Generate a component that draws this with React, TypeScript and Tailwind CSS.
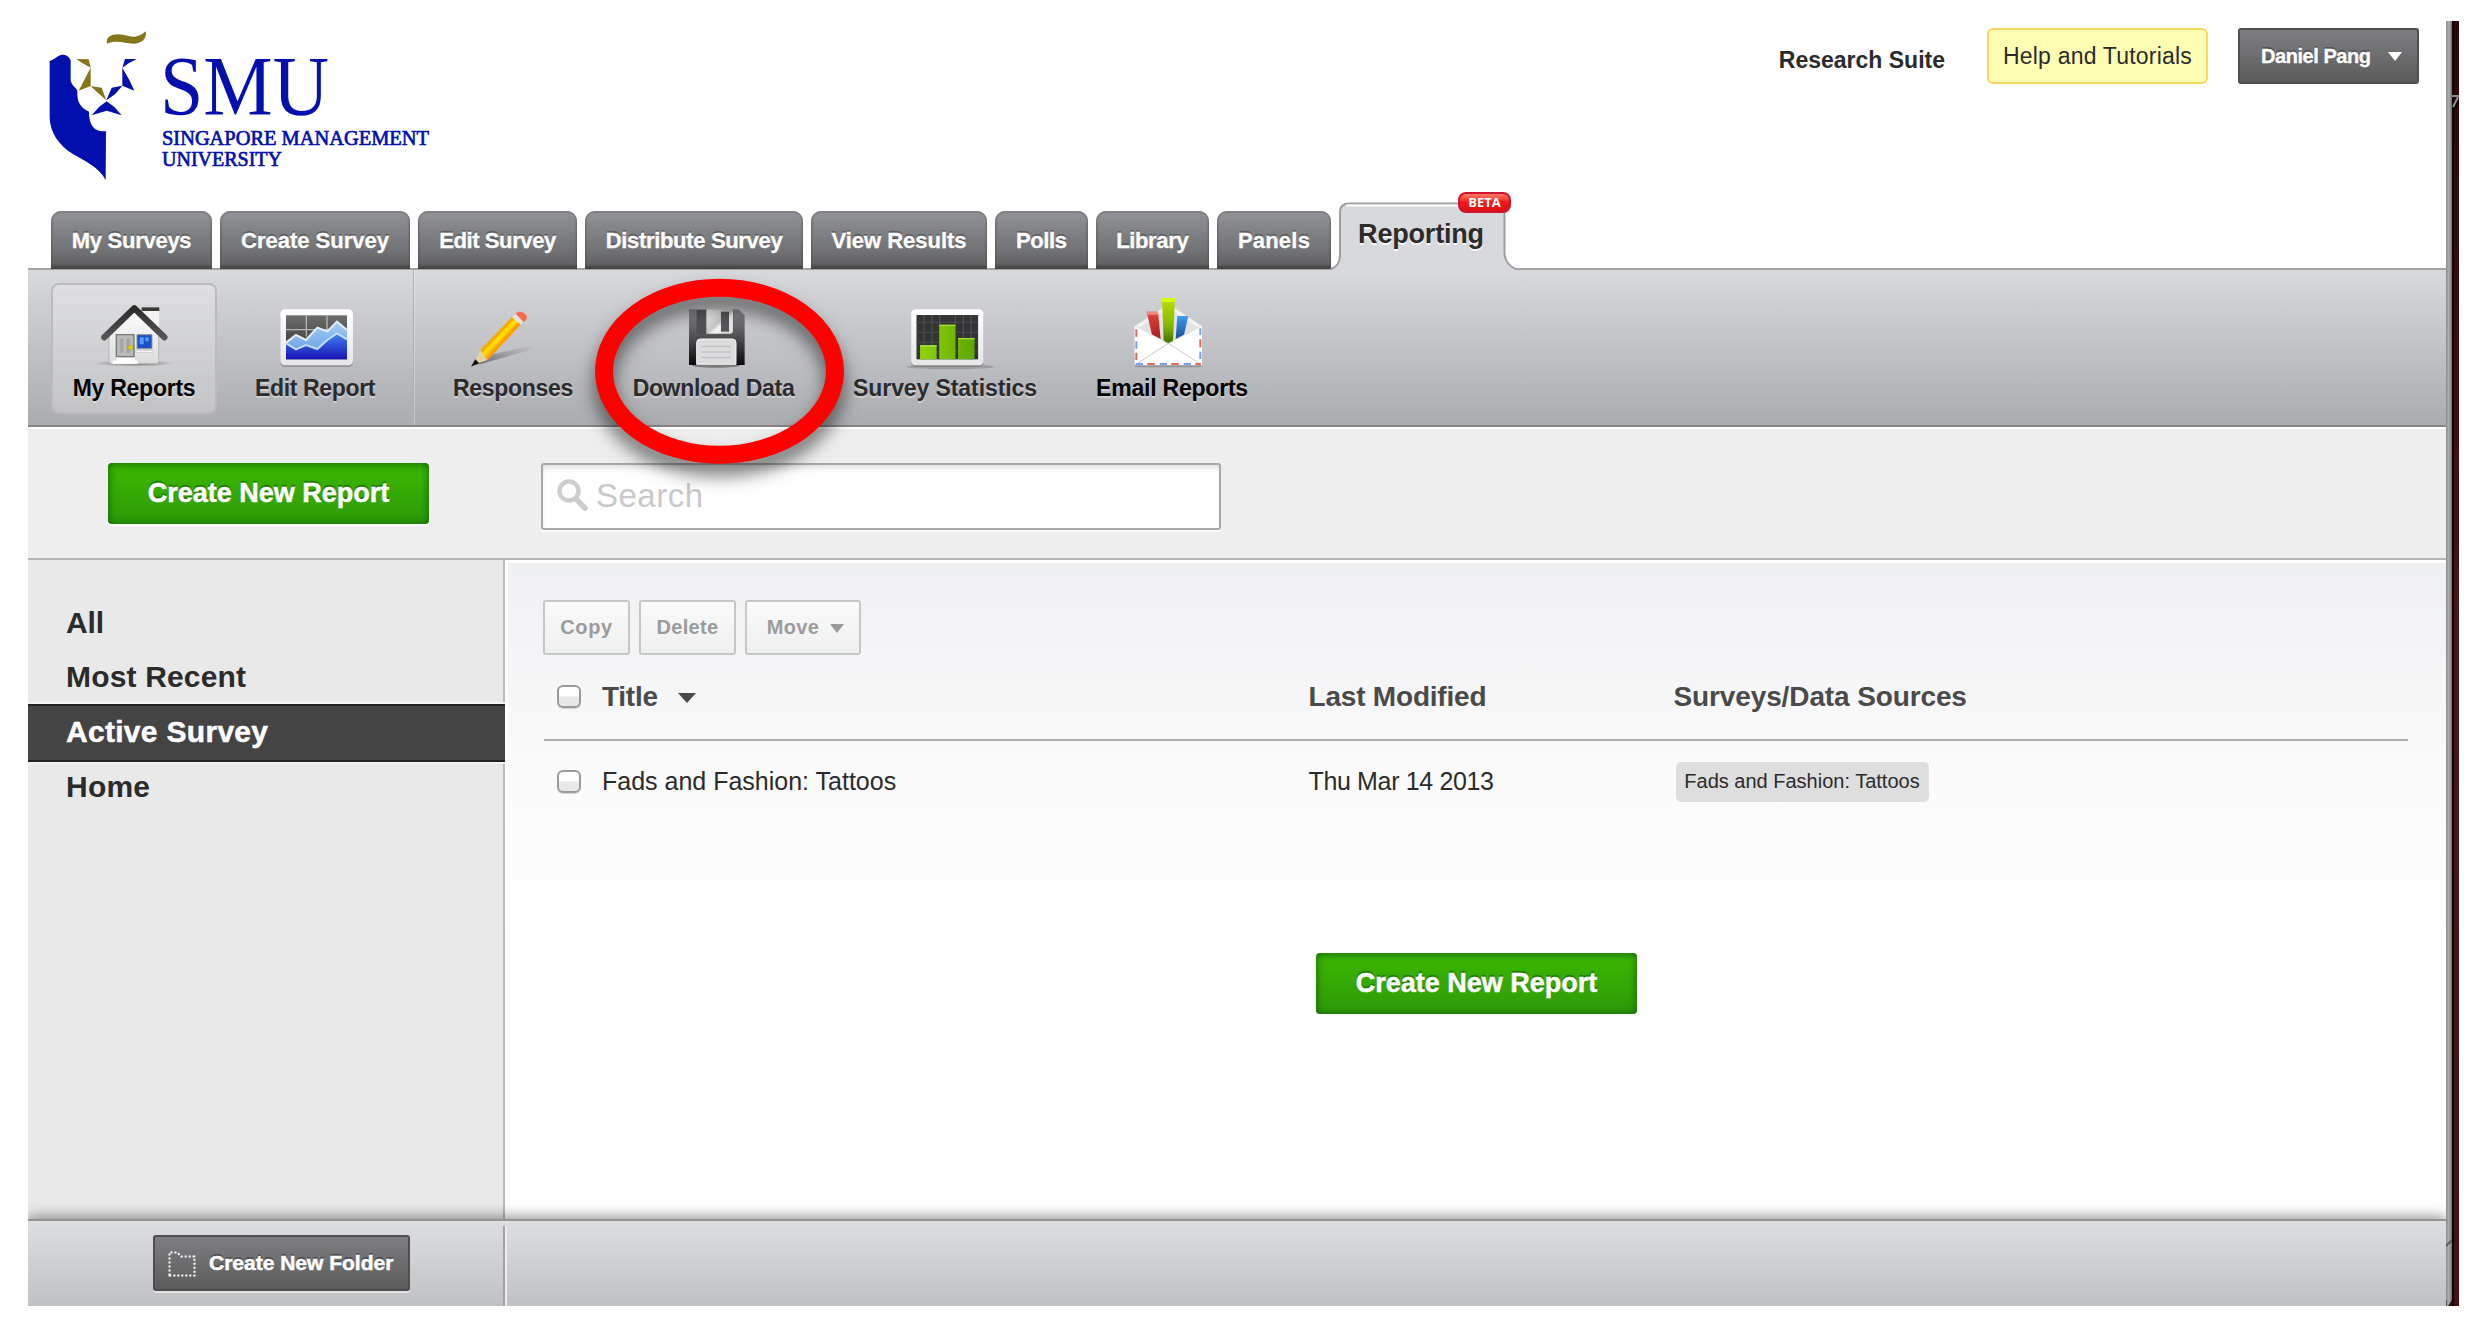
import type { ReactNode } from "react";

type Tab = { label: string; cls: string };

const tabs: Tab[] = [
  { label: "My Surveys", cls: "w-[161px] tracking-[-0.26px]" },
  { label: "Create Survey", cls: "w-[190px] tracking-normal" },
  { label: "Edit Survey", cls: "w-[159px] tracking-[-0.4px]" },
  { label: "Distribute Survey", cls: "w-[218px] tracking-[-0.32px]" },
  { label: "View Results", cls: "w-[176px] tracking-[-0.03px]" },
  { label: "Polls", cls: "w-[92.5px] tracking-[-0.39px]" },
  { label: "Library", cls: "w-[113.5px] tracking-[-0.35px]" },
  { label: "Panels", cls: "w-[114px] tracking-[0.21px]" },
];

function Logo() {
  return (
    <svg className="h-[170px] w-[450px]" viewBox="28 21 450 170">
      <g transform="scale(0.33333)">
        <path
          fill="#0310ad"
          d="M149 183C165 178 172 165 188 164C200 164 210 172 212 182L212 242C216 258 228 262 232 272C231 300 236 320 267 335C267 365 275 390 305 394L318 394L317 541C300 504 250 480 220 463C175 435 149 395 149 350Z"
        />
        <path
          fill="#85761a"
          d="M321 131C316 112 335 102 357 103C375 104 388 112 405 110C420 108 430 100 438 94C440 118 425 131 400 131C375 131 350 118 321 131Z"
        />
        <path fill="#85761a" d="M229 177L266 178L272 203L248 190ZM272 203L272 258L236 272ZM272 258L305 263L319 301L294 279Z" />
        <path
          fill="#0310ad"
          d="M375 177L410 177L386 190L367 203ZM367 203L388 240L403 272L367 257ZM367 257L345 283L319 301L335 263ZM320 304L343 321L365 346L320 332L275 346L297 321Z"
        />
      </g>
      <g fill="#0310ad" fontFamily="'Liberation Serif', serif">
        <text x="160" y="115.3" fontSize="85" textLength="169" lengthAdjust="spacingAndGlyphs">
          SMU
        </text>
        <g fontSize="21" stroke="#0310ad" strokeWidth="0.7">
          <text x="162" y="145.3" textLength="267" lengthAdjust="spacingAndGlyphs">
            SINGAPORE MANAGEMENT
          </text>
          <text x="162" y="165.7" textLength="120" lengthAdjust="spacingAndGlyphs">
            UNIVERSITY
          </text>
        </g>
      </g>
    </svg>
  );
}

const iconCls = "h-[80px] w-[80px] shrink-0 overflow-visible";

function HouseIcon() {
  return (
    <svg className={iconCls} viewBox="94 290 80 80">
      <defs>
        <linearGradient id="wall" x1="0" y1="0" x2="0" y2="1">
          <stop offset="0" stopColor="#fff" />
          <stop offset="1" stopColor="#dcdcdc" />
        </linearGradient>
        <linearGradient id="roof" x1="0" y1="0" x2="0" y2="1">
          <stop offset="0" stopColor="#2c2c2c" />
          <stop offset="1" stopColor="#555" />
        </linearGradient>
        <radialGradient id="ground">
          <stop offset="0" stopColor="#000" stopOpacity=".5" />
          <stop offset="1" stopColor="#000" stopOpacity="0" />
        </radialGradient>
      </defs>
      <g transform="translate(90 290) scale(0.33333)">
        <ellipse cx="132" cy="220" rx="118" ry="10" fill="url(#ground)" />
        <path d="M157 60H207V150H157Z" fill="#f4f4f4" />
        <path d="M155 52H208V63H155Z" fill="#3a3a38" />
        <path d="M57 125L133 58L206 125V216Q206 221 200 221H63Q57 221 57 216Z" fill="url(#wall)" stroke="#a8a8a8" strokeWidth="2" />
        <path d="M43 142L133 55L223 142" fill="none" stroke="url(#roof)" strokeWidth="19" strokeLinecap="round" strokeLinejoin="round" />
        <path d="M79 134H132V200H79Z" fill="#b9b9b7" stroke="#777" strokeWidth="4" />
        <path d="M88 144H102V190H88ZM108 144H122V190H108Z" fill="#a5a5a3" stroke="#d8d8d8" strokeWidth="1" />
        <circle cx="121" cy="172" r="7" fill="#e6d600" stroke="#8b8000" strokeWidth="1" />
        <path d="M141 134H186V176H141Z" fill="#1e50c8" stroke="#8f9499" strokeWidth="3" />
        <path d="M149 142H161V163H149ZM166 142H176V154H166Z" fill="#5a9bf5" />
        <path d="M138 181H189V187H138Z" fill="#fff" stroke="#aaa" strokeWidth="1.5" />
        <path d="M79 203H136V211H144V222H67V211H79Z" fill="#fff" stroke="#c4c4c4" strokeWidth="1" />
      </g>
    </svg>
  );
}

function AreaChartIcon() {
  return (
    <svg className={iconCls} viewBox="275 290 80 80">
      <defs>
        <linearGradient id="screen" x1="0" y1="0" x2="0" y2="1">
          <stop offset="0" stopColor="#6d6d6d" />
          <stop offset="1" stopColor="#2a2a2a" />
        </linearGradient>
        <linearGradient id="deep" x1="0" y1="0" x2="0" y2="1">
          <stop offset="0" stopColor="#3f86f2" />
          <stop offset="1" stopColor="#1a10b4" />
        </linearGradient>
        <linearGradient id="light" x1="0" y1="0" x2="0" y2="1">
          <stop offset="0" stopColor="#a8cdf5" />
          <stop offset="1" stopColor="#6ba5e6" />
        </linearGradient>
        <linearGradient id="frame" x1="0" y1="0" x2="0" y2="1">
          <stop offset="0" stopColor="#fff" />
          <stop offset="1" stopColor="#e6e6e8" />
        </linearGradient>
      </defs>
      <g transform="translate(90 290) scale(0.33333)">
        <rect x="571" y="63" width="218" height="168" rx="14" fill="#777" opacity=".6" />
        <rect x="571" y="58" width="218" height="168" rx="14" fill="url(#frame)" />
        <rect x="588" y="76" width="183" height="132" fill="url(#screen)" />
        <path d="M649 76V140M711 76V120M588 119H690M700 119H771" stroke="#b5b5b5" strokeWidth="4" fill="none" />
        <path d="M588 158L618 135L648 150L682 113L712 124L741 95L771 120V180H588Z" fill="url(#light)" />
        <path d="M588 160L618 178L648 165L682 177L712 150L741 130L771 148V208H588Z" fill="url(#deep)" />
        <path d="M588 158L618 135L648 150L682 113L712 124L741 95L771 120" fill="none" stroke="#e6ecfb" strokeWidth="6" />
        <path d="M588 160L618 178L648 165L682 177L712 150L741 130L771 148" fill="none" stroke="#c3daf8" strokeWidth="6" />
      </g>
    </svg>
  );
}

function PencilIcon() {
  return (
    <svg className={iconCls} viewBox="473 290 80 80">
      <defs>
        <linearGradient id="cast" x1="0" y1="1" x2="1" y2="0">
          <stop offset="0" stopColor="#333" stopOpacity=".65" />
          <stop offset="1" stopColor="#666" stopOpacity="0" />
        </linearGradient>
      </defs>
      <g transform="translate(400 280) scale(0.33333)">
        <path d="M222 256L262 226L400 196L398 208L250 250Z" fill="url(#cast)" />
        <path d="M241 210L336 111L362 134L262 240Z" fill="#ffbf00" />
        <path d="M241 210L336 111L344 118L248 219Z" fill="#f7ab00" />
        <path d="M257 234L355 127L362 134L262 240Z" fill="#ff9c00" />
        <path d="M247 218L343 117L352 125L254 227Z" fill="#ffdc00" />
        <path d="M336 111L347 101L371 124L362 134Z" fill="#e3e3e3" />
        <path d="M347 101C352 93 364 94 371 99C380 105 384 112 379 118L371 126Z" fill="#f8694f" />
        <path d="M241 210L262 240L234 250L226 240Z" fill="#e6d2a0" />
        <path d="M226 238L237 249L213 260Z" fill="#111" />
      </g>
    </svg>
  );
}

function FloppyIcon() {
  return (
    <svg className={iconCls} viewBox="674 290 80 80">
      <defs>
        <linearGradient id="disk" x1="0" y1="0" x2="0" y2="1">
          <stop offset="0" stopColor="#8d8e90" />
          <stop offset=".45" stopColor="#555558" />
          <stop offset="1" stopColor="#0c0c0d" />
        </linearGradient>
        <linearGradient id="metal" x1="0" y1="0" x2="1" y2="1">
          <stop offset="0" stopColor="#fff" />
          <stop offset=".5" stopColor="#c4c4c4" />
          <stop offset=".6" stopColor="#f2f2f2" />
          <stop offset="1" stopColor="#d8d8d8" />
        </linearGradient>
      </defs>
      <g transform="translate(400 280) scale(0.33333)">
        <ellipse cx="948" cy="256" rx="72" ry="7" fill="#444" opacity=".55" />
        <path d="M867 88H1016L1034 106V255H867Z" fill="url(#disk)" />
        <path d="M890 90H1000V150Q1000 162 988 162H890Z" fill="#4b4c4f" opacity=".8" />
        <path d="M919 88H999V152Q999 161 990 161H919Z" fill="url(#metal)" />
        <path d="M963 95H987V155H963Z" fill="#555659" />
        <path d="M890 253V188Q890 177 901 177H997Q1008 177 1008 188V253Z" fill="#dcdcde" stroke="#f7f7f7" strokeWidth="3" />
        <path d="M905 199H993M905 216H993M905 233H993" stroke="#b8b8ba" strokeWidth="3" />
      </g>
    </svg>
  );
}

function BarChartIcon() {
  return (
    <svg className={iconCls} viewBox="905 290 80 80">
      <defs>
        <linearGradient id="bar" x1="0" y1="0" x2="1" y2="0">
          <stop offset="0" stopColor="#8fd40a" />
          <stop offset="1" stopColor="#5fa600" />
        </linearGradient>
      </defs>
      <g transform="translate(600 180) scale(0.4464 0.33333)">
        <ellipse cx="785" cy="560" rx="98" ry="8" fill="#555" opacity=".3" />
        <rect x="697" y="393" width="162" height="168" rx="12" fill="#777" opacity=".6" />
        <rect x="697" y="388" width="162" height="168" rx="12" fill="url(#frame)" />
        <rect x="709" y="405" width="138" height="133" fill="#333436" />
        <path
          d="M726 405V538M744 405V538M761 405V538M796 405V538M814 405V538M831 405V538M709 427H847M709 457H847M709 487H847M709 515H847"
          stroke="#4d4e50"
          strokeWidth="3"
        />
        <path d="M717 496H754V538H717ZM760 434H796V538H760ZM802 474H839V538H802Z" fill="url(#bar)" />
        <path d="M717 498H754M760 436H796M802 476H839" stroke="#a9e23a" strokeWidth="4" />
      </g>
    </svg>
  );
}

function EnvelopeIcon() {
  return (
    <svg className={iconCls} viewBox="1132 290 80 80">
      <defs>
        <linearGradient id="red" x1="0" y1="0" x2="0" y2="1">
          <stop offset="0" stopColor="#e0483c" />
          <stop offset="1" stopColor="#a81c18" />
        </linearGradient>
        <linearGradient id="green" gradientUnits="userSpaceOnUse" x1="0" y1="384" x2="0" y2="521">
          <stop offset="0" stopColor="#b8e000" />
          <stop offset=".6" stopColor="#86b800" />
          <stop offset="1" stopColor="#3f6d00" />
        </linearGradient>
        <linearGradient id="blue" x1="0" y1="0" x2="0" y2="1">
          <stop offset="0" stopColor="#3f9cf0" />
          <stop offset="1" stopColor="#1a4f92" />
        </linearGradient>
      </defs>
      <g transform="translate(1100 170) scale(0.33333)">
        <rect x="104" y="560" width="202" height="32" rx="5" fill="#555" opacity=".4" />
        <path d="M104 468L190 412H222L306 468V520H104Z" fill="#f3f3f3" stroke="#d0d0d0" strokeWidth="2" />
        <path d="M116 474L205 415L296 474L205 520Z" fill="#e2e2e4" />
        <path d="M140 425H174L182 508L156 494Z" fill="url(#red)" />
        <path d="M140 425H174L175 434H142Z" fill="#f08a80" />
        <path d="M232 438H265L252 494L227 508Z" fill="url(#blue)" />
        <path d="M104 468L205 520L306 468V586H104Z" fill="#fff" />
        <path d="M186 384H225L219 514L205 521L191 514Z" fill="url(#green)" />
        <path d="M186 384H225L224 396H187Z" fill="#d4ff00" />
        <path d="M108 583L205 520L302 583" fill="none" stroke="#c9c9c9" strokeWidth="3" />
        <path d="M108 470L205 520L302 470" fill="none" stroke="#d8d8d8" strokeWidth="2" />
        <path d="M109 478V500M109 548V570M301 508V532" stroke="#e0695e" strokeWidth="6" />
        <path d="M109 514V536M301 475V495M301 545V567" stroke="#7d9df0" strokeWidth="6" />
        <path d="M107 582H303" stroke="#7d9df0" strokeWidth="6" strokeDasharray="22 50" />
        <path d="M142 582H303" stroke="#e0695e" strokeWidth="6" strokeDasharray="22 50" />
      </g>
    </svg>
  );
}

function ToolItem({ label, cls, icon }: { label: string; cls: string; icon: ReactNode }) {
  return (
    <div className={"mt-[13px] flex h-[131px] flex-col items-center rounded-[8px] border-2 pt-[5px] " + cls}>
      {icon}
      <span className="mt-[4px] text-[23px] leading-[28px] font-bold whitespace-nowrap [text-shadow:0_2px_0_rgba(255,255,255,0.35)]">{label}</span>
    </div>
  );
}

function GreenButton() {
  return (
    <button className="flex h-[61px] w-[321px] items-center justify-center rounded-[4px] bg-linear-to-b from-[#3cb800] to-[#2d9a08] text-[27px] leading-[61px] font-bold text-white shadow-[inset_0_1px_8px_rgba(0,70,0,0.75),0_2px_0_rgba(255,255,255,0.8)] [-webkit-text-stroke:0.5px_white] [text-shadow:0_-2px_1px_rgba(0,60,0,0.5)]">
      Create New Report
    </button>
  );
}

function SmallButton({ label, cls, caret }: { label: string; cls: string; caret?: boolean }) {
  return (
    <button
      className={
        "flex h-[55px] items-center justify-center gap-[11px] rounded-[3px] border-2 border-[#c6c7c8] bg-linear-to-b from-[#fafafa] to-[#eeefef] text-[20px] leading-[51px] font-bold text-[#9b9b9b] " +
        cls
      }
    >
      {label}
      {caret && <Caret className="mt-[2px] h-[9px] w-[14px] text-[#9b9b9b]" />}
    </button>
  );
}

function Caret({ className }: { className: string }) {
  return (
    <svg className={className} viewBox="0 0 14 9" preserveAspectRatio="none">
      <path d="M0 0H14L7 9Z" fill="currentColor" />
    </svg>
  );
}

function CheckBox() {
  return (
    <span className="ml-[13px] block h-[23px] w-[24px] rounded-[6px] border-2 border-[#9b9b9b] bg-linear-to-b from-white from-45% to-[#e8e8e8] to-55% shadow-[0_1px_1px_rgba(0,0,0,0.15)]" />
  );
}

export default function App() {
  return (
    <div className="relative flex h-[1332px] w-[2478px] overflow-hidden bg-white pt-[21px] pl-[28px] font-['Liberation_Sans',Arial,sans-serif]">
      <div className="flex h-[1285px] w-[2418px] flex-col overflow-hidden bg-white">
        <header className="flex h-[170px] shrink-0 justify-between">
          <Logo />
          <div className="flex items-start pt-[7px] pr-[27px]">
            <span className="mt-[5px] mr-[42px] text-[23px] leading-[55px] font-bold text-[#2b2b2b]">Research Suite</span>
            <button className="mr-[30px] h-[56px] w-[221px] rounded-[6px] border-2 border-[#fdd45c] bg-[#ffffb3] text-center text-[23px] leading-[53px] tracking-[0.21px] text-[#2b2b2b]">
              Help and Tutorials
            </button>
            <button className="flex h-[56px] w-[181px] items-center rounded-[3px] border-2 border-[#4f4f50] bg-linear-to-b from-[#7e7f82] to-[#5b5b5b] pl-[21px] text-[20px] leading-[50px] font-bold tracking-[-0.45px] text-white [-webkit-text-stroke:0.3px_white] [text-shadow:0_-2px_0_rgba(0,0,0,0.3)]">
              <span className="-mt-[1px]">Daniel Pang</span>
              <Caret className="mt-[1px] ml-[17px] h-[9px] w-[14px] text-white" />
            </button>
          </div>
        </header>

        <nav className="relative z-10 -mb-[1px] flex h-[78px] shrink-0 items-end gap-2 pl-[23px]">
          {tabs.map((t) => (
            <a
              key={t.label}
              className={
                "h-[58px] rounded-t-[10px] bg-linear-to-b from-[#929396] via-[#707174] via-70% to-[#5c5c5e] pt-[1px] text-center text-[22px] leading-[57px] font-bold whitespace-nowrap text-white shadow-[inset_0_2px_0_#808184,inset_0_-3px_3px_#444] [-webkit-text-stroke:0.3px_white] [text-shadow:0_-2px_0_rgba(0,0,0,0.3)] " +
                t.cls
              }
            >
              {t.label}
            </a>
          ))}
          <div className="relative h-[67px] w-[166px]">
            <svg className="absolute -top-[1px] -left-[9px] h-[70px] w-[186px]" viewBox="1330 200 186 70">
              <path
                d="M1330 268.5C1337 266 1340 262 1340 254V211Q1340 202.5 1349 202.5H1496Q1504.5 202.5 1504.5 211V252C1504.5 260 1510 266 1516 268.5V270H1330Z"
                fill="#d8d9dd"
              />
              <path
                d="M1330 268.5C1337 266 1340 262 1340 254V211Q1340 202.5 1349 202.5H1496Q1504.5 202.5 1504.5 211V252C1504.5 260 1510 266 1516 268"
                fill="none"
                stroke="#9d9ea0"
                strokeWidth="2"
              />
              <path d="M1346 204.5H1498" stroke="#fff" strokeWidth="2" />
            </svg>
            <span className="relative block pr-[2px] text-center text-[27px] leading-[64px] font-bold tracking-[-0.19px] text-[#2b2b2b] [text-shadow:0_2px_0_rgba(255,255,255,0.8)]">
              Reporting
            </span>
            <span className="absolute -top-[10px] left-[119px] flex h-[21px] w-[53px] items-center justify-center rounded-[8px] border-2 border-[#cc1430] bg-linear-to-b from-[#ff7a66] via-[#ee1a1a] via-45% to-[#e01010] font-['Open_Sans',sans-serif] text-[13px] leading-[17px] font-bold text-white">
              BETA
            </span>
          </div>
        </nav>

        <div className="flex h-[159px] shrink-0 border-t-2 border-b-2 border-t-[#a2a3a5] border-b-[#858587] bg-linear-to-b from-[#d8d9dd] to-[#abacaf] pl-[23px] text-[#2b2b2e]">
          <ToolItem label="My Reports" cls="w-[166px] border-[#babbbe] bg-white/25 text-black tracking-[-0.25px]" icon={<HouseIcon />} />
          <ToolItem label="Edit Report" cls="w-[196px] border-transparent tracking-[-0.35px]" icon={<AreaChartIcon />} />
          <div className="w-[2px] border-l border-l-[#aeafb2] bg-white/30" />
          <ToolItem label="Responses" cls="w-[196px] border-transparent tracking-[-0.28px]" icon={<PencilIcon />} />
          <ToolItem label="Download Data" cls="w-[205px] border-transparent tracking-[-0.34px]" icon={<FloppyIcon />} />
          <ToolItem label="Survey Statistics" cls="w-[258px] border-transparent tracking-[-0.09px]" icon={<BarChartIcon />} />
          <ToolItem label="Email Reports" cls="w-[196px] border-transparent text-black tracking-[-0.22px]" icon={<EnvelopeIcon />} />
        </div>

        <div className="flex h-[133px] shrink-0 border-t-2 border-b-2 border-t-white border-b-[#b6b6b6] bg-[#eeeeee] pt-[34px] pl-[80px]">
          <GreenButton />
          <div className="ml-[112px] flex h-[67px] w-[680px] rounded-[3px] border-2 border-[#a8a8a8] bg-white pl-[13px] shadow-[inset_0_5px_6px_-2px_rgba(0,0,0,0.12),0_2px_0_rgba(255,255,255,0.7)]">
            <svg className="mt-[12px] h-[36px] w-[34px]" viewBox="0 0 34 36">
              <circle cx="13" cy="14" r="9.5" fill="none" stroke="#cdcdcb" strokeWidth="4.5" />
              <path d="M20 22L29 31" stroke="#cdcdcb" strokeWidth="5.5" strokeLinecap="round" />
            </svg>
            <span className="ml-[6px] text-[33px] leading-[61px] tracking-[0.49px] text-[#c9c9c9]">Search</span>
          </div>
        </div>

        <div className="flex min-h-0 flex-1">
          <aside className="flex w-[477px] shrink-0 flex-col border-r-2 border-[#b9b9b9] bg-[#e9e9e9] pt-[36px] text-[30px] font-bold text-[#2b2b2b]">
            <a className="h-[53px] pl-[38px] leading-[54px] tracking-[-0.17px]">All</a>
            <a className="h-[55px] pl-[38px] leading-[55px] tracking-[0.16px]">Most Recent</a>
            <a className="z-10 -mr-[2px] -mb-[2px] h-[58px] bg-[#444444] pl-[38px] leading-[55px] tracking-[0.3px] text-white shadow-[inset_0_2px_0_#222,inset_0_-2px_0_#222,0_-2px_0_#f4f4f4,0_2px_0_#f4f4f4] [-webkit-text-stroke:0.5px_white]">
              Active Survey
            </a>
            <a className="h-[55px] pl-[38px] leading-[53px] tracking-[0.21px]">Home</a>
          </aside>
          <main className="flex-1 border-t-[3px] border-l-[3px] border-white bg-linear-to-b from-[#eff0f2] via-[#fafafb] via-30% to-white to-60% pt-[37px] pr-[38px] pl-[35px]">
            <div className="flex gap-[9px]">
              <SmallButton label="Copy" cls="w-[87px] tracking-[0.67px]" />
              <SmallButton label="Delete" cls="w-[97px] tracking-[0.29px]" />
              <SmallButton label="Move" cls="w-[116px] pl-[5px] tracking-[0.29px]" caret />
            </div>
            <div className="ml-[1px] grid h-[86px] grid-cols-[58px_706.5px_365px_1fr] items-start border-b-2 border-[#acacac] pt-[17px] text-[28px] leading-[50px] font-bold text-[#4a4a4a]">
              <div className="pt-[13px]">
                <CheckBox />
              </div>
              <div className="flex items-center tracking-[-0.27px]">
                Title
                <Caret className="mt-[2px] ml-[20px] h-[10px] w-[18px] text-[#4a4a4a]" />
              </div>
              <div className="tracking-[-0.2px]">Last Modified</div>
              <div className="tracking-[-0.12px]">Surveys/Data Sources</div>
            </div>
            <div className="ml-[1px] grid h-[81px] grid-cols-[58px_706.5px_365px_1fr] items-center text-[25px] leading-[81px] text-[#2b2b2b]">
              <CheckBox />
              <div>Fads and Fashion: Tattoos</div>
              <div className="tracking-[-0.35px]">Thu Mar 14 2013</div>
              <div className="ml-[2px] h-[40px] w-[253px] rounded-[5px] bg-[#dedede] text-center text-[20px] leading-[39px] whitespace-nowrap">
                Fads and Fashion: Tattoos
              </div>
            </div>
            <div className="mt-[131px] ml-[773px]">
              <GreenButton />
            </div>
          </main>
        </div>

        <footer className="relative z-10 flex h-[87px] shrink-0 border-t-2 border-[#949494] bg-linear-to-b from-[#dddee0] to-[#c0c1c4] shadow-[0_-3px_12px_rgba(0,0,0,0.4)]">
          <div className="w-[475px] pt-[14px] pl-[125px]">
            <button className="flex h-[56px] w-[257px] items-center rounded-[3px] border-2 border-[#4f4f50] bg-linear-to-b from-[#7e7f82] to-[#5b5b5b] pl-[13px] text-[21px] leading-[52px] font-bold whitespace-nowrap text-white shadow-[0_2px_0_rgba(255,255,255,0.5)] [-webkit-text-stroke:0.5px_white] [text-shadow:0_-2px_0_rgba(0,0,0,0.35)]">
              <svg className="mt-[1px] mr-[13px] h-[26px] w-[28px] shrink-0" viewBox="0 0 28 26">
                <path d="M1.5 24.5V1.5H9.5L13 5.5H26.5V24.5Z" fill="none" stroke="#fff" strokeWidth="2" strokeDasharray="2 2" />
              </svg>
              Create New Folder
            </button>
          </div>
          <div className="mt-[5px] w-[4px] border-r-2 border-l-2 border-r-[#ededee] border-l-[#a0a1a3]" />
        </footer>
      </div>

      <div className="h-[1285px] w-[6px] bg-linear-to-r from-[#8a8d8d] via-[#aeb1b0] to-[#6d7070]" />
      <div className="h-[1285px] w-[7px] bg-linear-to-b from-[#2a0508] via-[#481719] to-[#451216] shadow-[inset_2px_0_1px_#170203]" />
      <svg className="absolute top-[90px] left-[2452px] h-[28px] w-[7px]" viewBox="0 0 7 28">
        <path d="M0 28V12L7 6V12L3 20Z" fill="#120304" />
        <path d="M0 6H7M1 17L6 7" stroke="#8d8d8d" strokeWidth="2" />
      </svg>
      <svg className="absolute top-[1236px] left-[2440px] h-[70px] w-[12px]" viewBox="0 0 12 70">
        <path d="M6 10L12 4" stroke="#5a5d5d" strokeWidth="2" />
        <path d="M0 70L7 64V70Z" fill="#555" />
        <path d="M8 70L12 64V70Z" fill="#3a1013" />
      </svg>
      <svg className="absolute top-[1300px] left-[28px] h-[6px] w-[5px]" viewBox="0 0 5 6">
        <path d="M0 1L5 6H0Z" fill="#333" />
      </svg>

      <svg
        className="absolute top-[261px] left-[577px] z-20 h-[240px] w-[285px] overflow-visible drop-shadow-[0_12px_9px_rgba(0,0,0,0.55)]"
        viewBox="577 261 285 240"
      >
        <ellipse cx="719.5" cy="371.3" rx="115.5" ry="83.5" fill="none" stroke="#ff0000" strokeWidth="18" />
      </svg>
    </div>
  );
}
